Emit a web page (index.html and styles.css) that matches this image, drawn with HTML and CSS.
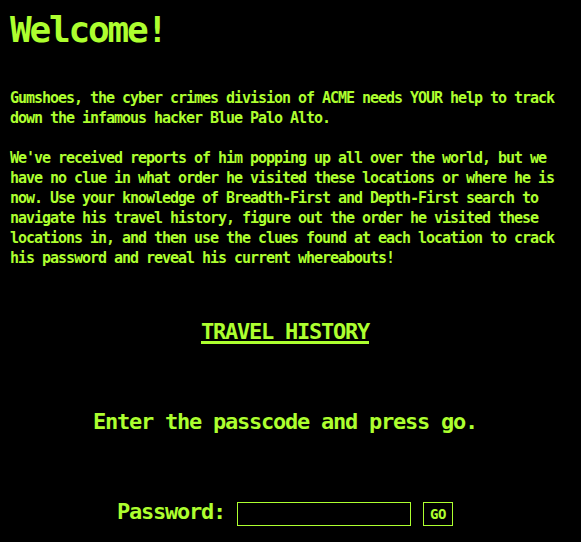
FILE: index.html
```html
<!DOCTYPE html>
<html lang="en">
<head>
<meta charset="utf-8">
<title>Welcome!</title>
<link rel="stylesheet" href="styles.css">
</head>
<body>
<main class="page">
  <h1 class="title">Welcome!</h1>
  <p class="intro">Gumshoes, the cyber crimes division of ACME needs YOUR help to track down the infamous hacker Blue Palo Alto.</p>
  <p class="intro">We've received reports of him popping up all over the world, but we have no clue in what order he visited these locations or where he is now. Use your knowledge of Breadth-First and Depth-First search to navigate his travel history, figure out the order he visited these locations in, and then use the clues found at each location to crack his password and reveal his current whereabouts!</p>
  <div class="history"><a class="history-link" href="#">TRAVEL HISTORY</a></div>
  <div class="prompt">Enter the passcode and press go.</div>
  <form class="login" onsubmit="return false;">
    <label class="login-label" for="pw">Password:</label>
    <input class="login-input" id="pw" type="password">
    <button class="login-go" type="submit">GO</button>
  </form>
</main>
</body>
</html>
```

FILE: styles.css
```css
html, body {
  margin: 0;
  padding: 0;
  background: #000;
}

body {
  color: #adff2f;
  font-family: "DejaVu Sans Mono", "Liberation Mono", monospace;
  font-weight: bold;
}

.page {
  width: 550px;
  margin-left: 10px;
}

.title {
  margin: 10px 0 38px;
  font-size: 36px;
  line-height: 40px;
  letter-spacing: -2.17px;
  font-weight: bold;
}

.intro {
  margin: 20px 0;
  font-size: 15px;
  line-height: 20px;
  letter-spacing: -1.03px;
}

.history {
  margin-top: 51px;
  text-align: center;
  font-size: 22px;
  line-height: 26px;
  letter-spacing: -1.245px;
}

.history-link {
  color: #adff2f;
  text-decoration: underline;
  text-decoration-thickness: 3px;
  text-underline-offset: 2px;
}

.prompt {
  margin-top: 64px;
  text-align: center;
  font-size: 22px;
  line-height: 26px;
  letter-spacing: -1.245px;
}

.login {
  margin: 67px 0 0;
  display: flex;
  justify-content: center;
  align-items: flex-start;
  gap: 12px;
}

.login-label {
  font-size: 22px;
  line-height: 24px;
  letter-spacing: -1.245px;
  margin-top: -2px;
}

.login-input {
  box-sizing: border-box;
  width: 174px;
  height: 24px;
  margin: 0;
  padding: 0 4px;
  border: 1px solid #adff2f;
  background: #000;
  color: #adff2f;
  font-family: inherit;
  outline: none;
}

.login-go {
  box-sizing: border-box;
  width: 30px;
  height: 24px;
  margin: 0;
  padding: 0;
  border: 1px solid #adff2f;
  background: #000;
  color: #adff2f;
  font-family: "DejaVu Sans Mono", "Liberation Mono", monospace;
  font-weight: bold;
  font-size: 14px;
  letter-spacing: -0.43px;
  line-height: 22px;
  text-align: center;
}
```
